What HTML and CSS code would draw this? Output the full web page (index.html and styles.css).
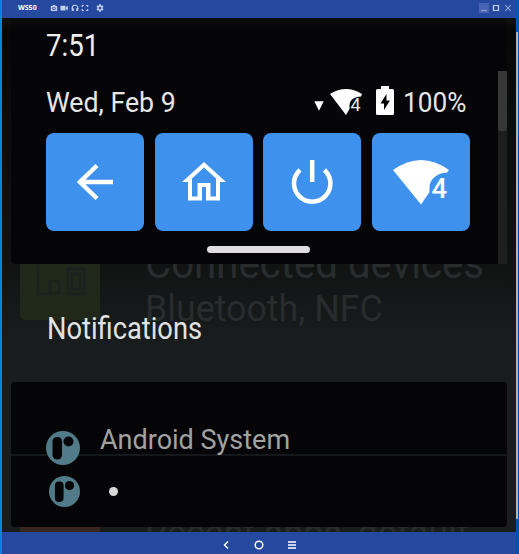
FILE: index.html
```html
<!DOCTYPE html>
<html lang="en">
<head>
<meta charset="utf-8">
<title>WS50</title>
<link rel="stylesheet" href="styles.css">
</head>
<body>
<div class="window">
  <header class="titlebar">
    <span class="title">WS50</span>
    <div class="tools">
      <svg viewBox="0 0 8 8"><path fill-rule="evenodd" d="M.8 2h1.500L3 1.100h2L5.700 2h1.500v5H.8zM4 2.700a1.700 1.700 0 1 0 .01 0zM4 3.500a.9.9 0 1 1-.01 0z"/></svg>
      <svg viewBox="0 0 8 8"><path d="M.4 1.700h5v4.800h-5zM5.800 3.300l2-1.500v4.600l-2-1.500z"/></svg>
      <svg viewBox="0 0 8 8"><path class="line" d="M1.200 5V4a2.800 2.800 0 0 1 5.600 0v1"/><path d="M.8 4.200h2V7h-2zM5.200 4.200h2V7h-2z"/></svg>
      <svg viewBox="0 0 8 8"><path class="line" d="M1.300 3V1.500h1.500M5.200 1.500h1.500V3M6.700 5v1.500H5.200M2.800 6.500H1.300V5"/></svg>
      <svg class="gear" viewBox="0 0 24 24"><path fill-rule="evenodd" d="M9.500 1h5l.6 3.200 2 1.100 3-1.100 2.500 4.300-2.500 2.200v2.600l2.500 2.200-2.500 4.300-3-1.100-2 1.100-.6 3.200h-5l-.6-3.200-2-1.100-3 1.100-2.500-4.300 2.500-2.200v-2.600L1.400 8.500l2.500-4.300 3 1.100 2-1.100zM12 8a4 4 0 1 0 .01 0z"/></svg>
    </div>
    <div class="controls">
      <svg class="min" viewBox="0 0 10 10"><path d="M2 7.500h6"/></svg>
      <svg viewBox="0 0 10 10"><path d="M2.500 2.500h5v5h-5z"/></svg>
      <svg class="close" viewBox="0 0 10 10"><path d="M2.200 2.200l5.600 5.600M7.800 2.200L2.200 7.800"/></svg>
    </div>
  </header>

  <main class="screen">
    <div class="backdrop">
      <div class="tile green"><svg viewBox="0 0 80 60"><path d="M18 5v29h12V21h9v12H28M48 34V9h16v25zM52 14h8v15h-8z"/></svg></div>
      <div class="tile brown"></div>
      <span class="under connected">Connected devices</span>
      <span class="under bluetooth">Bluetooth, NFC</span>
      <span class="under recent">Recent apps, default</span>
    </div>

    <section class="quick">
      <div class="clock"><span>7:51</span></div>
      <div class="status">
        <span class="date">Wed, Feb 9</span>
        <svg class="caret" viewBox="0 0 10 10"><path d="M.3.300h9.400L5 9.700z"/></svg>
        <svg class="signal" viewBox="0 0 32 26"><path d="M0 5Q16-5 32 5L31 7.500C25 8 20 10 19.500 16V20L16 26z"/><text x="20.500" y="21.800" font-size="18">4</text></svg>
        <svg class="battery" viewBox="0 0 18 29"><path fill-rule="evenodd" d="M5 0h8v3h3.500Q18 3 18 4.500v23q0 1.500-1.500 1.500h-15Q0 29 0 27.500v-23Q0 3 1.500 3H5zM10.500 8L4.500 17.500h3.500V24l6-9.500h-3.500z"/></svg>
        <span class="percent">100%</span>
      </div>
      <div class="buttons">
        <div class="button"><svg viewBox="0 0 98 98"><path class="stroke" d="M67 49H34M51 32.500L34 49l17 16.500"/></svg></div>
        <div class="button"><svg viewBox="0 0 98 98"><path fill-rule="evenodd" d="M49 29L71 49H65V67.500H51V54H47V67.500H33V49H27zM49 34.500L37 45.500V63.500H42.500V50H55.500V63.500H61V45.500z"/></svg></div>
        <div class="button"><svg viewBox="0 0 98 98"><path class="stroke power" d="M49.200 27v22M37 37A18.200 18.200 0 1 0 61.400 37"/></svg></div>
        <div class="button"><svg viewBox="0 0 98 98"><path d="M21 37Q49 17 77 37L75 39.500C65 40 58 46 57.500 54V59L49 71.500z"/><text x="59.500" y="64.500" font-size="27.500">4</text></svg></div>
      </div>
      <div class="handle"></div>
      <div class="scroll"><div class="thumb"></div></div>
    </section>

    <h1 class="heading"><span>Notifications</span></h1>

    <section class="cards">
      <article class="card first">
        <svg class="logo" viewBox="0 0 34 34"><circle cx="17" cy="17" r="17"/><rect x="6.500" y="6" width="9.500" height="22.500" rx="4.500"/><circle class="hole" cx="22.500" cy="10.500" r="5"/></svg>
        <span class="app">Android System</span>
      </article>
      <article class="card second">
        <svg class="logo small" viewBox="0 0 34 34"><circle cx="17" cy="17" r="17"/><rect x="6.500" y="6" width="9.500" height="22.500" rx="4.500"/><circle class="hole" cx="22.500" cy="10.500" r="5"/></svg>
        <span class="dot"></span>
      </article>
    </section>
  </main>

  <nav class="navbar">
    <svg viewBox="0 0 12 12"><path d="M8 2.500L4.500 6 8 9.500"/></svg>
    <svg viewBox="0 0 12 12"><circle cx="6" cy="6" r="3.800"/></svg>
    <svg viewBox="0 0 12 12"><path d="M2 3h8M2 6h8M2 9h8"/></svg>
  </nav>
</div>
<aside class="edge"><div class="edge-light"></div></aside>
</body>
</html>
```
FILE: styles.css
```css
* { box-sizing: border-box; }
body {
  margin: 0;
  width: 519px;
  height: 554px;
  display: flex;
  overflow: hidden;
  font-family: Roboto, "Liberation Sans", sans-serif;
  background: #0056b0;
}
svg { display: block; flex: none; }
span { white-space: nowrap; }
.window {
  width: 516px;
  height: 554px;
  border-left: 2px solid #0087dc;
  display: flex;
  flex-direction: column;
}
.titlebar {
  height: 18px;
  flex: none;
  background: #25499f;
  display: flex;
  align-items: center;
  padding: 0 3px 2px 16px;
}
.title {
  width: 32px;
  color: #fff;
  font: bold 7px/8px "Open Sans", sans-serif;
}
.tools { display: flex; gap: 2.400px; }
.tools svg { width: 8px; height: 8px; fill: #c3cfed; }
.tools .line { fill: none; stroke: #c3cfed; stroke-width: 1.100; }
.tools .gear { margin-left: 4px; }
.controls { margin-left: auto; display: flex; gap: 2px; }
.controls svg { width: 10px; height: 10px; fill: none; stroke: #c5d2f5; stroke-width: 1.200; }
.controls .min { background: #4863b4; stroke: #8b9ed5; }
.controls .close { stroke: #8fa2d8; }

.screen {
  height: 514px;
  flex: none;
  position: relative;
  overflow: hidden;
  padding: 0 9px;
  background: linear-gradient(#10110f 0, #070708 12px, #0b0c0c 100px, #111413 250px, #191d1e 330px, #191d1e 100%);
}
.backdrop { position: absolute; inset: 0; }
.tile { position: absolute; left: 18px; width: 80px; height: 60px; border-radius: 5px; }
.green { top: 242px; background: #20281a; }
.green svg { width: 80px; height: 60px; fill: none; stroke: #1b221e; stroke-width: 3; }
.brown { top: 500px; background: #38261f; }
.under { position: absolute; left: 143px; color: #282c2d; transform-origin: 0 0; line-height: 50px; }
.connected { top: 221px; font-size: 42px; transform: scaleX(.957); }
.bluetooth { top: 266px; font-size: 37px; transform: scaleX(.967); }
.recent { top: 491px; font-size: 42px; transform: scaleX(.85); }

.quick {
  position: relative;
  height: 246px;
  margin: 0;
  padding: 9px 37px 0 35px;
  border-radius: 0 0 4px 4px;
  background: linear-gradient(#0d0e0c 0, #050407 12px);
}
.clock { height: 36px; margin-top: 1px; font-size: 31px; line-height: 36px; color: #eee; }
.clock span { display: inline-block; transform: scaleX(.89); transform-origin: 0 0; }
.status {
  height: 57px;
  margin-top: 20px;
  display: flex;
  align-items: flex-start;
  color: #e6e6e6;
  font-size: 27px;
  line-height: 38px;
}
.date { width: 268px; transform: scaleX(.99); transform-origin: 0 0; }
.caret { width: 10px; height: 10px; margin-top: 17px; fill: #fff; }
.signal { width: 32px; height: 26px; margin: 5px 0 0 6px; fill: #fff; overflow: visible; }
.signal text { fill: #e8e8e8; }
.battery { width: 18px; height: 29px; margin: 2px 9px 0 14px; fill: #fff; }
.percent { transform: scaleX(.97); transform-origin: 0 0; }
.buttons { display: grid; grid-template-columns: repeat(4, 98px); gap: 10.500px; margin-top: -8px; }
.button { height: 98px; border-radius: 8px; background: #3f91ee; }
.button svg { width: 98px; height: 98px; fill: #fff; }
.button .stroke { fill: none; stroke: #fff; stroke-width: 4.500; }
.button text { font-weight: 500; fill: #fff; }
.handle { width: 103px; height: 7px; margin: 15px 0 0 161px; border-radius: 4px; background: #dfdddf; }
.scroll { position: absolute; right: 0; top: 53px; width: 9px; height: 193px; background: #1e1e1e; }
.thumb { height: 60px; border-radius: 0 0 3px 3px; background: #373737; }

.heading {
  position: relative;
  margin: 47px 0 35px 36px;
  height: 36px;
  font-size: 31px;
  line-height: 36px;
  font-weight: 400;
  color: #e2e2e2;
}
.heading span { display: inline-block; transform: scaleX(.88); transform-origin: 0 0; }
.cards { position: relative; display: flex; flex-direction: column; gap: 2px; background: #14181a; border-radius: 4px; }
.card { background: #050406; display: flex; }
.first { height: 72px; border-radius: 4px 4px 0 0; padding: 49px 0 0 35px; }
.second { height: 71px; border-radius: 0 0 4px 4px; padding: 20px 0 0 38px; }
.logo { width: 34px; height: 34px; fill: #527b89; position: relative; z-index: 1; }
.logo.small { width: 31px; height: 31px; }
.logo rect, .logo .hole { fill: #050406; }
.app { margin: -10px 0 0 20px; color: #a2a2a2; font-size: 27px; line-height: 38px; height: 38px; }
.dot { width: 9px; height: 9px; margin: 11px 0 0 29px; border-radius: 50%; background: #d6d6d6; }

.navbar {
  height: 22px;
  background: #25499f;
  display: flex;
  align-items: center;
  justify-content: center;
  gap: 21px;
  padding-top: 3px;
}
.navbar svg { width: 12px; height: 12px; fill: none; stroke: #fff; stroke-width: 1.500; }
.edge { width: 3px; padding-top: 32px; background: linear-gradient(#0058b5, #0040a0 60%, #0054ad); }
.edge-light { width: 2px; height: 487px; background: #b5b3b4; }
```
